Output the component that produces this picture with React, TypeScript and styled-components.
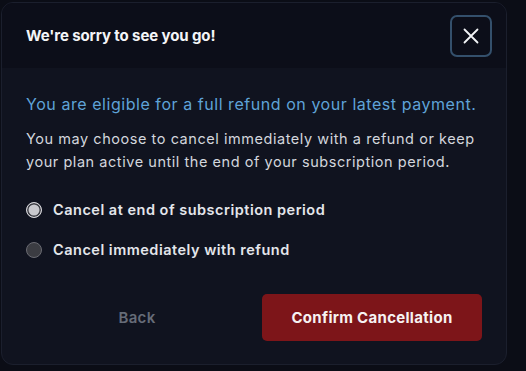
import React, { useState } from "react";
import styled, { createGlobalStyle, css } from "styled-components";

const GlobalStyle = createGlobalStyle`
  html, body {
    margin: 0;
    padding: 0;
    background: #0b0d16;
  }
  body {
    font-family: Inter, "Liberation Sans", sans-serif;
    -webkit-font-smoothing: antialiased;
  }
`;

const Page = styled.div`
  width: 526px;
  height: 371px;
  padding: 2px 0 0 1px;
  box-sizing: border-box;
`;

const Modal = styled.div`
  width: 506px;
  height: 363px;
  box-sizing: border-box;
  border: 1px solid #1b1f2d;
  border-radius: 12px;
  overflow: hidden;
  background: #10131f;
  display: flex;
  flex-direction: column;
`;

const Header = styled.div`
  height: 65px;
  flex-shrink: 0;
  display: flex;
  align-items: center;
  justify-content: space-between;
  padding: 0 14px 0 24px;
  background: #0c0e19;
`;

const Title = styled.h2`
  margin: 0;
  font-size: 15px;
  font-weight: 700;
  color: #f4f5f7;
  letter-spacing: -0.1px;
`;

const CloseButton = styled.button`
  width: 42px;
  height: 42px;
  display: flex;
  align-items: center;
  justify-content: center;
  background: transparent;
  border: 2px solid #34506c;
  border-radius: 7px;
  padding: 0;
  cursor: pointer;
`;

const Body = styled.div`
  flex: 1;
  display: flex;
  flex-direction: column;
  padding: 24px 24px 23px 24px;
`;

const Eligible = styled.p`
  margin: 0;
  font-size: 16px;
  line-height: 24px;
  letter-spacing: 0.55px;
  color: #5fa3d8;
`;

const Description = styled.p`
  margin: 11px 0 0;
  font-size: 14.5px;
  line-height: 23px;
  letter-spacing: 0.55px;
  color: #d3d6dd;
`;

const Options = styled.div`
  display: flex;
  flex-direction: column;
  gap: 18px;
  margin-top: 26px;
`;

const Option = styled.label`
  display: flex;
  align-items: center;
  gap: 11px;
  font-size: 14.5px;
  line-height: 22px;
  font-weight: 600;
  letter-spacing: 0.5px;
  color: #e4e6eb;
  cursor: pointer;
`;

const Radio = styled.span<{ checked: boolean }>`
  width: 16px;
  height: 16px;
  box-sizing: border-box;
  border-radius: 50%;
  flex-shrink: 0;
  ${({ checked }) =>
    checked
      ? css`
          border: 1.5px solid #d6d6da;
          background: #c9c9ce;
          box-shadow: inset 0 0 0 1.5px #3a3b42;
        `
      : css`
          border: 1px solid #6a6b72;
          background: #3b3c42;
        `}
`;

const Footer = styled.div`
  margin-top: auto;
  display: grid;
  grid-template-columns: 1fr 220px;
  gap: 14px;
`;

const BackButton = styled.button`
  height: 47px;
  background: transparent;
  border: none;
  font-family: inherit;
  font-size: 15px;
  font-weight: 600;
  letter-spacing: 0.3px;
  color: #666c78;
  cursor: pointer;
`;

const ConfirmButton = styled.button`
  height: 47px;
  background: #7d1519;
  border: none;
  border-radius: 5px;
  font-family: inherit;
  font-size: 15px;
  font-weight: 700;
  letter-spacing: 0.3px;
  color: #f6f2f2;
  cursor: pointer;
`;

const options = [
  { id: "end", label: "Cancel at end of subscription period" },
  { id: "now", label: "Cancel immediately with refund" },
];

export default function App() {
  const [choice, setChoice] = useState("end");

  return (
    <>
      <GlobalStyle />
      <Page>
        <Modal>
          <Header>
            <Title>We're sorry to see you go!</Title>
            <CloseButton aria-label="Close">
              <svg width="18" height="18" viewBox="0 0 18 18" fill="none">
                <path
                  d="M2.5 2.5L15.5 15.5M15.5 2.5L2.5 15.5"
                  stroke="#f2f4f7"
                  strokeWidth="1.8"
                  strokeLinecap="round"
                />
              </svg>
            </CloseButton>
          </Header>
          <Body>
            <Eligible>You are eligible for a full refund on your latest payment.</Eligible>
            <Description>
              You may choose to cancel immediately with a refund or keep your plan active until
              the end of your subscription period.
            </Description>
            <Options>
              {options.map((o) => (
                <Option key={o.id} onClick={() => setChoice(o.id)}>
                  <Radio checked={choice === o.id} />
                  {o.label}
                </Option>
              ))}
            </Options>
            <Footer>
              <BackButton>Back</BackButton>
              <ConfirmButton>Confirm Cancellation</ConfirmButton>
            </Footer>
          </Body>
        </Modal>
      </Page>
    </>
  );
}
